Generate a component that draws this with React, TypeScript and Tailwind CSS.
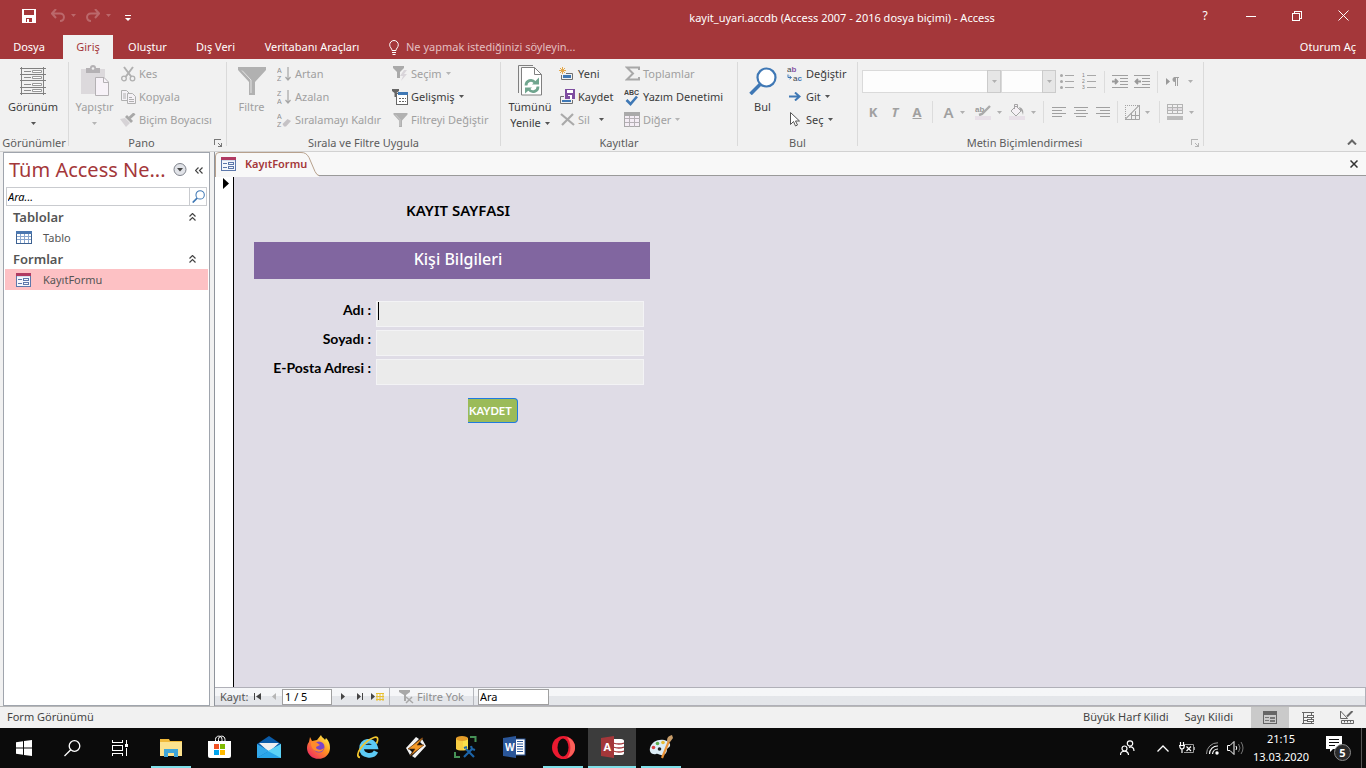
import React from 'react';

type IconProps = {
  w: number;
  h: number;
  children: React.ReactNode;
  crisp?: boolean;
};

function Icon({ w, h, children, crisp }: IconProps) {
  return (
    <svg
      width={w}
      height={h}
      viewBox={`0 0 ${w} ${h}`}
      fill="none"
      className="shrink-0"
      shapeRendering={crisp ? 'crispEdges' : 'auto'}
      aria-hidden="true"
    >
      {children}
    </svg>
  );
}

function Arrow({ color = '#555555' }: { color?: string }) {
  return (
    <Icon w={5} h={3}>
      <path d="M0 0h5L2.5 3z" fill={color} />
    </Icon>
  );
}

/* ---------- Ribbon icons ---------- */

function ViewIcon() {
  return (
    <Icon w={26} h={28}>
      <path d="M1.500 0v28M23.500 0v28M0 1.500h26M0 7.500h26M0 13.500h26M0 20.500h26M0 26.500h26" stroke="#808080" />
      <path d="M4 4.500h7M4 10.500h7M4 17.500h7M4 23.500h7" stroke="#8c8c8c" />
      <path d="M12.500 3.500h9v2h-9zM12.500 9.500h9v2h-9zM12.500 16.500h9v2h-9zM12.500 22.500h9v2h-9z" fill="#ffffff" stroke="#999999" />
    </Icon>
  );
}

function PasteIcon() {
  return (
    <Icon w={28} h={31}>
      <rect x="0" y="4" width="24" height="25" fill="#dcd9dc" />
      <path d="M5 3h4a3 3 0 0 1 6 0h4v5H5z" fill="#b4b1b4" />
      <circle cx="12" cy="3.500" r="1.300" fill="#f1f1f1" />
      <path d="M14.500 12.500h8.500l4.500 4.500v13.500h-13z" fill="#f7f2f8" stroke="#b4b1b4" />
      <path d="M22.500 12.500v5h5" stroke="#b4b1b4" />
    </Icon>
  );
}

function CutIcon() {
  return (
    <Icon w={15} h={16}>
      <path d="M3 1l7.500 10M12 1L4.500 11" stroke="#b0b0b0" strokeWidth="2" />
      <circle cx="3" cy="12.500" r="2.300" stroke="#b0b0b0" strokeWidth="1.300" />
      <circle cx="11.500" cy="12.500" r="2.300" stroke="#b0b0b0" strokeWidth="1.300" />
    </Icon>
  );
}

function CopyIcon() {
  return (
    <Icon w={15} h={14}>
      <path d="M.5.5h5l3 3v7h-8z" fill="#f5f2f6" stroke="#b0b0b0" />
      <path d="M2 4h3M2 6h3M2 8h3" stroke="#b0b0b0" />
      <path d="M6.500 3.500h5l3 3v7h-8z" fill="#f5f2f6" stroke="#b0b0b0" />
      <path d="M8 7.500h3M8 9.500h5M8 11.500h5" stroke="#b0b0b0" />
    </Icon>
  );
}

function BrushIcon() {
  return (
    <Icon w={16} h={14}>
      <path d="M0 6l5-1 5 5-4 4z" fill="#d6d3d6" />
      <path d="M5 4l2-2 6 6-2 2z" fill="#a8a8a8" />
      <path d="M9.500 5L14.500.5" stroke="#a8a8a8" strokeWidth="3" />
    </Icon>
  );
}

function Funnel({ w, h, color = '#b1b1b1' }: { w: number; h: number; color?: string }) {
  return (
    <svg width={w} height={h} viewBox="0 0 28 28" className="shrink-0" aria-hidden="true">
      <path d="M0 0h28v3L17 15v13h-6V15L0 3z" fill={color} />
      <path d="M4 3.500l9 9.500v13" stroke="#e4e4e4" fill="none" />
    </svg>
  );
}

function SortIcon({ kind }: { kind: 'asc' | 'desc' | 'clear' }) {
  const top = kind === 'desc' ? 'Z' : 'A';
  const bottom = kind === 'desc' ? 'A' : 'Z';
  return (
    <Icon w={15} h={18}>
      <text x="0" y="8" fontSize="7" fontFamily="Liberation Sans, sans-serif" fill="#8f8f8f">{top}</text>
      <text x="0" y="16" fontSize="7" fontFamily="Liberation Sans, sans-serif" fill="#8f8f8f">{bottom}</text>
      {kind === 'clear' ? (
        <path d="M5.500 13l5-5 3.500 2-5 5.500H7z" fill="#c5c2c5" />
      ) : (
        <path d="M11 2v12M8.500 12l2.500 3 2.500-3" stroke="#a6a6a6" strokeWidth="1.200" />
      )}
    </Icon>
  );
}

function SelectionIcon() {
  return (
    <Icon w={15} h={15}>
      <path d="M0 0h11v2L7 6v6H4V6L0 2z" fill="#aaaaaa" />
      <path d="M11 4l-4 6h3l-2 5 6-7h-3l3-4z" fill="#d9d5da" />
    </Icon>
  );
}

function AdvancedIcon() {
  return (
    <Icon w={16} h={16}>
      <path d="M0 0h7v2L4.500 4v4h-2V4L0 2z" fill="#666666" />
      <rect x="4.500" y="4.500" width="11" height="11" fill="#ffffff" stroke="#666666" />
      <rect x="6" y="3" width="10" height="3" fill="#3f78b5" />
      <path d="M7 9.500h7M7 12.500h7" stroke="#666666" strokeDasharray="2 1" />
    </Icon>
  );
}

function RefreshIcon() {
  return (
    <Icon w={25} h={31}>
      <path d="M.5 28V.5H15" stroke="#808080" />
      <path d="M3.500 2.500h13l7 7v20.500h-20z" fill="#ffffff" stroke="#808080" />
      <path d="M16.500 2.500v7h7" stroke="#808080" />
      <path d="M8 20.500c0-5 6-7 9-3" stroke="#6fa58e" strokeWidth="2.800" />
      <path d="M14 19.500h7v-7z" fill="#6fa58e" />
      <path d="M20 21.500c0 5-6 7-9 3" stroke="#6fa58e" strokeWidth="2.800" />
      <path d="M14 22.500H7v6z" fill="#6fa58e" />
    </Icon>
  );
}

function NewIcon() {
  return (
    <Icon w={16} h={14}>
      <path d="M3.500 0v7M0 3.500h7M1 1l5 5M6 1L1 6" stroke="#e5a94c" />
      <path d="M7 6.500h6.500v6H2.500V8" stroke="#707070" />
      <rect x="4" y="8" width="8" height="3" fill="#3f78b5" />
    </Icon>
  );
}

function SaveRecordIcon() {
  return (
    <Icon w={16} h={15}>
      <path d="M5 7.500H1.500v7h12V11" stroke="#707070" />
      <rect x="3" y="11" width="9" height="2" fill="#3f78b5" />
      <rect x="6" y="0" width="10" height="10" fill="#7e4da0" />
      <path d="M8 1h6v3H8zM9 6h4v4H9z" fill="#ffffff" />
      <rect x="9" y="7" width="2" height="3" fill="#7e4da0" />
    </Icon>
  );
}

function DeleteIcon() {
  return (
    <Icon w={15} h={13}>
      <path d="M1 1l13 11M13 1L2 12" stroke="#aaaaaa" strokeWidth="2.200" />
    </Icon>
  );
}

function SigmaIcon() {
  return (
    <Icon w={15} h={15}>
      <path d="M14 4V1.500H2l6 6-6 6h12V11" stroke="#a8a8a8" strokeWidth="2" />
    </Icon>
  );
}

function SpellIcon() {
  return (
    <Icon w={16} h={18}>
      <text x="0" y="7" fontSize="7" fontWeight="700" fontFamily="Liberation Sans, sans-serif" fill="#444444">ABC</text>
      <path d="M2.500 12l4 4L13 8.500" stroke="#3f78b5" strokeWidth="2.600" />
    </Icon>
  );
}

function MoreIcon() {
  return (
    <Icon w={16} h={15} crisp>
      <rect x="0.500" y="0.500" width="15" height="14" fill="#f4edf5" stroke="#a8a8a8" />
      <rect x="0" y="0" width="16" height="4" fill="#aaaaaa" />
      <path d="M1 6.500h15M1 10.500h15M5.500 4v11M10.500 4v11" stroke="#b5b0b5" />
    </Icon>
  );
}

function FindIcon({ size = 28 }: { size?: number }) {
  return (
    <svg width={size} height={size} viewBox="0 0 28 28" fill="none" className="shrink-0" aria-hidden="true">
      <circle cx="17.500" cy="10.500" r="9" fill="#ffffff" stroke="#3f78b5" strokeWidth="2.200" />
      <path d="M11 17.500L1.500 27" stroke="#3f78b5" strokeWidth="3.600" />
    </svg>
  );
}

function ReplaceIcon() {
  return (
    <Icon w={17} h={19}>
      <text x="0" y="8" fontSize="8" fontFamily="Liberation Sans, sans-serif" fill="#444444">
        a<tspan fill="#8a55a5" fontWeight="700">b</tspan>
      </text>
      <text x="6" y="17" fontSize="8" fontFamily="Liberation Sans, sans-serif" fill="#444444">
        a<tspan fill="#3f78b5" fontWeight="700">c</tspan>
      </text>
      <path d="M1 10.500v3h3M2.500 12l2 1.500-2 1.500" stroke="#3f78b5" />
    </Icon>
  );
}

function GoIcon() {
  return (
    <Icon w={12} h={9}>
      <path d="M0 4.500h10M6 .5l4.500 4L6 8.500" stroke="#3f78b5" strokeWidth="2" />
    </Icon>
  );
}

function CursorIcon() {
  return (
    <Icon w={10} h={15}>
      <path d="M.5.5v12l3-3 2 4.500 2-1-2-4h4z" fill="#ffffff" stroke="#555555" />
    </Icon>
  );
}

function LauncherIcon({ color }: { color: string }) {
  return (
    <Icon w={8} h={8} crisp>
      <path d="M.5 6V.5H7M4 4l3 3M7.500 4v3.500H4" stroke={color} />
    </Icon>
  );
}

function LinesIcon({ lines }: { lines: [number, number][] }) {
  return (
    <Icon w={14} h={11} crisp>
      {lines.map(([x, len], i) => (
        <path key={i} d={`M${x} ${i * 3 + 0.5}h${len}`} stroke="#a0a0a0" />
      ))}
    </Icon>
  );
}

function ListIcon({ numbered }: { numbered?: boolean }) {
  return (
    <Icon w={15} h={18}>
      {[3, 9, 15].map((y, i) => (
        <g key={y}>
          {numbered ? (
            <text x="0" y={y + 1} fontSize="5" fontFamily="Liberation Sans, sans-serif" fill="#808080">{i + 1}</text>
          ) : (
            <circle cx="1.500" cy={y - 0.5} r="1.500" fill="#a8a8a8" />
          )}
          <path d={`M5 ${y - 0.5}h9`} stroke="#a8a8a8" />
        </g>
      ))}
    </Icon>
  );
}

function IndentIcon({ back }: { back?: boolean }) {
  return (
    <Icon w={16} h={14}>
      <path d="M0 .5h16M8 3.500h8M8 6.500h8M8 9.500h8M0 12.500h16" stroke="#a0a0a0" />
      {back ? (
        <path d="M1 6.500h6M4 4L1.500 6.500 4 9" stroke="#999999" strokeWidth="1.800" />
      ) : (
        <path d="M0 6.500h6M3 4l2.500 2.500L3 9" stroke="#999999" strokeWidth="1.800" />
      )}
    </Icon>
  );
}

/* ---------- Ribbon parts ---------- */

type GroupProps = {
  label: string;
  className: string;
  launcher?: string;
  children: React.ReactNode;
};

function Group({ label, className, launcher, children }: GroupProps) {
  return (
    <section className={`flex shrink-0 flex-col ${className}`} aria-label={label}>
      <div className="flex h-[73px] w-full items-start">{children}</div>
      <div className="flex h-4 w-full items-center">
        <span className="flex-1 text-center whitespace-nowrap text-[#5c5c5c]">{label}</span>
        {launcher && (
          <button type="button" aria-label={`${label} ayarları`} className="mr-1">
            <LauncherIcon color={launcher} />
          </button>
        )}
      </div>
    </section>
  );
}

function Separator() {
  return <div className="h-[84px] w-px shrink-0 bg-[#dadada]" />;
}

type BigButtonProps = {
  className: string;
  icon: React.ReactNode;
  label: string;
  second?: string;
  arrow?: boolean;
  disabled?: boolean;
};

function BigButton({ className, icon, label, second, arrow, disabled }: BigButtonProps) {
  return (
    <button
      type="button"
      disabled={disabled}
      className={`flex shrink-0 flex-col items-center ${disabled ? 'text-[#a0a0a0]' : 'text-[#3c3c3c]'} ${className}`}
    >
      <span className="flex h-[37px] items-center">{icon}</span>
      <span className="h-4 leading-4 whitespace-nowrap">{label}</span>
      {second && (
        <span className="flex h-4 items-center gap-1 leading-4 whitespace-nowrap">
          {second}
          <Arrow />
        </span>
      )}
      {arrow && (
        <span className="flex h-4 items-center">
          <Arrow color={disabled ? '#b5b5b5' : '#555555'} />
        </span>
      )}
    </button>
  );
}

type SmallButtonProps = {
  icon: React.ReactNode;
  label: string;
  arrow?: boolean;
  disabled?: boolean;
};

function SmallButton({ icon, label, arrow, disabled }: SmallButtonProps) {
  return (
    <button
      type="button"
      disabled={disabled}
      className={`flex h-[23px] items-center whitespace-nowrap ${disabled ? 'text-[#a0a0a0]' : 'text-[#3c3c3c]'}`}
    >
      <span className="mr-[3px] flex w-4 items-center justify-center">{icon}</span>
      {label}
      {arrow && (
        <span className="ml-1">
          <Arrow color={disabled ? '#b5b5b5' : '#555555'} />
        </span>
      )}
    </button>
  );
}

function ToolButton({ label, className, children }: { label: string; className: string; children: React.ReactNode }) {
  return (
    <button type="button" disabled aria-label={label} className={`flex h-5 shrink-0 items-center justify-center text-[#a0a0a0] ${className}`}>
      {children}
    </button>
  );
}

function Combo({ label, className }: { label: string; className: string }) {
  return (
    <div className={`relative h-[23px] shrink-0 ${className}`}>
      <select disabled aria-label={label} className="h-full w-full appearance-none border border-[#dadada] bg-[#fdfdfd]">
        <option></option>
      </select>
      <span className="pointer-events-none absolute inset-y-0 right-0 flex w-[14px] items-center justify-center border border-[#cbcbcb] bg-[#e6e6e6]">
        <Arrow color="#b0b0b0" />
      </span>
    </div>
  );
}

function ToolDivider({ className }: { className: string }) {
  return <span className={`h-[22px] w-px shrink-0 bg-[#dcdcdc] ${className}`} />;
}

function TitleBar() {
  return (
    <div className="flex h-[35px] items-center">
      <div className="flex w-[300px] items-center pb-1 pl-[22px]">
        <button type="button" aria-label="Kaydet">
          <Icon w={14} h={14} crisp>
            <path d="M0 0h14v14H0zM2 1v5h10V1zM4 9v4h6V9z" fill="#ffffff" fillRule="evenodd" />
            <rect x="5" y="10" width="2" height="3" fill="#ffffff" />
          </Icon>
        </button>
        <button type="button" disabled aria-label="Geri Al" className="ml-[15px] flex items-center gap-[6px]">
          <Icon w={14} h={13}>
            <path d="M5 0L1 4.500 5 9M1.500 4.500H9c5.500 0 5 7.500 0 7.500" stroke="#bb686b" strokeWidth="2" />
          </Icon>
          <Arrow color="#bb686b" />
        </button>
        <button type="button" disabled aria-label="Yinele" className="ml-[10px] flex items-center gap-[6px]">
          <Icon w={14} h={13}>
            <path d="M9 0l4 4.500L9 9M12.500 4.500H5c-5.500 0-5 7.500 0 7.500" stroke="#bb686b" strokeWidth="2" />
          </Icon>
          <Arrow color="#bb686b" />
        </button>
        <button type="button" aria-label="Hızlı Erişim Araç Çubuğunu Özelleştir" className="mt-1 ml-[14px]">
          <Icon w={6} h={6}>
            <path d="M0 .5h6" stroke="#ffffff" />
            <path d="M0 3h6L3 6z" fill="#ffffff" />
          </Icon>
        </button>
      </div>
      <div className="flex-1 pl-[202px] text-center whitespace-nowrap text-white">
        kayit_uyari.accdb (Access 2007 - 2016 dosya biçimi) - Access
      </div>
      <div className="flex w-[184px] shrink-0 items-center pb-1 text-white">
        <button type="button" aria-label="Yardım" className="w-[46px] text-xs">?</button>
        <button type="button" aria-label="Simge Durumuna Küçült" className="flex w-[46px] justify-center">
          <Icon w={10} h={10} crisp><path d="M0 5.500h10" stroke="#ffffff" /></Icon>
        </button>
        <button type="button" aria-label="Geri Yükle" className="flex w-[46px] justify-center">
          <Icon w={10} h={10} crisp>
            <path d="M.5 2.500h7v7h-7zM2.500 2V.5h7v7H8" stroke="#ffffff" />
          </Icon>
        </button>
        <button type="button" aria-label="Kapat" className="flex w-[46px] justify-center">
          <Icon w={11} h={11}><path d="M.5.5l10 10M10.500.5l-10 10" stroke="#ffffff" /></Icon>
        </button>
      </div>
    </div>
  );
}

function RibbonTabs() {
  return (
    <nav className="flex h-6 items-center whitespace-nowrap text-white">
      <button type="button" className="w-[63px] pr-[5px] text-center">Dosya</button>
      <button type="button" className="h-full w-[50px] bg-[#f1f1f1] text-center text-[#a4373a]">Giriş</button>
      <button type="button" className="w-[69px] text-center">Oluştur</button>
      <button type="button" className="w-[67px] text-center">Dış Veri</button>
      <button type="button" className="w-[126px] text-center">Veritabanı Araçları</button>
      <button type="button" className="ml-[14px] flex items-center gap-[7px] text-[#e3bfc0]">
        <Icon w={10} h={15}>
          <path d="M3 10.500C3 8.500.7 7.500.7 4.800a4.300 4.300 0 0 1 8.600 0C9.300 7.500 7 8.500 7 10.500z" stroke="#ffffff" />
          <path d="M3 12.500h4M3.500 14.500h3" stroke="#ffffff" />
        </Icon>
        Ne yapmak istediğinizi söyleyin...
      </button>
      <button type="button" className="mr-[10px] ml-auto">Oturum Aç</button>
    </nav>
  );
}

function Ribbon() {
  return (
    <div className="flex h-[93px] items-start overflow-hidden border-b border-[#d2d2d2] bg-[#f1f1f1] pt-[3px]">
      <Group label="Görünümler" className="w-[68px]">
        <BigButton className="w-[66px]" icon={<ViewIcon />} label="Görünüm" arrow />
      </Group>
      <Separator />
      <Group label="Pano" className="w-[157px]" launcher="#777777">
        <BigButton className="w-[51px]" icon={<PasteIcon />} label="Yapıştır" arrow disabled />
        <div className="flex flex-col">
          <SmallButton icon={<CutIcon />} label="Kes" disabled />
          <SmallButton icon={<CopyIcon />} label="Kopyala" disabled />
          <SmallButton icon={<BrushIcon />} label="Biçim Boyacısı" disabled />
        </div>
      </Group>
      <Separator />
      <Group label="Sırala ve Filtre Uygula" className="w-[273px]">
        <BigButton className="w-[49px]" icon={<Funnel w={28} h={28} />} label="Filtre" disabled />
        <div className="flex w-[116px] flex-col">
          <SmallButton icon={<SortIcon kind="asc" />} label="Artan" disabled />
          <SmallButton icon={<SortIcon kind="desc" />} label="Azalan" disabled />
          <SmallButton icon={<SortIcon kind="clear" />} label="Sıralamayı Kaldır" disabled />
        </div>
        <div className="flex flex-col">
          <SmallButton icon={<SelectionIcon />} label="Seçim" arrow disabled />
          <SmallButton icon={<AdvancedIcon />} label="Gelişmiş" arrow />
          <SmallButton icon={<Funnel w={15} h={14} />} label="Filtreyi Değiştir" disabled />
        </div>
      </Group>
      <Separator />
      <Group label="Kayıtlar" className="w-[236px]">
        <BigButton className="w-[58px]" icon={<RefreshIcon />} label="Tümünü" second="Yenile" />
        <div className="flex w-[65px] flex-col">
          <SmallButton icon={<NewIcon />} label="Yeni" />
          <SmallButton icon={<SaveRecordIcon />} label="Kaydet" />
          <div className="flex items-center gap-[9px]">
            <SmallButton icon={<DeleteIcon />} label="Sil" disabled />
            <button type="button" aria-label="Silme seçenekleri"><Arrow /></button>
          </div>
        </div>
        <div className="flex flex-col">
          <SmallButton icon={<SigmaIcon />} label="Toplamlar" disabled />
          <SmallButton icon={<SpellIcon />} label="Yazım Denetimi" />
          <SmallButton icon={<MoreIcon />} label="Diğer" arrow disabled />
        </div>
      </Group>
      <Separator />
      <Group label="Bul" className="w-[119px]">
        <BigButton className="w-[49px]" icon={<FindIcon />} label="Bul" />
        <div className="flex flex-col">
          <SmallButton icon={<ReplaceIcon />} label="Değiştir" />
          <SmallButton icon={<GoIcon />} label="Git" arrow />
          <SmallButton icon={<CursorIcon />} label="Seç" arrow />
        </div>
      </Group>
      <Separator />
      <Group label="Metin Biçimlendirmesi" className="w-[345px]" launcher="#b5b5b5">
        <div className="flex flex-col pt-2 pl-1">
          <div className="flex items-center">
            <Combo label="Yazı Tipi" className="w-[139px]" />
            <Combo label="Yazı Tipi Boyutu" className="w-[55px]" />
            <ToolButton label="Madde İşaretleri" className="w-[22px]"><ListIcon /></ToolButton>
            <ToolButton label="Numaralandırma" className="w-[22px]"><ListIcon numbered /></ToolButton>
            <ToolDivider className="mr-1 ml-1" />
            <ToolButton label="Girintiyi Artır" className="w-[22px]"><IndentIcon /></ToolButton>
            <ToolButton label="Girintiyi Azalt" className="w-[22px]"><IndentIcon back /></ToolButton>
            <ToolDivider className="mr-2 ml-1" />
            <ToolButton label="Metin Yönü" className="gap-[9px]">
              <Icon w={13} h={10}>
                <path d="M0 1l4 3.500L0 8z" fill="#999999" />
                <path d="M9 0a2.500 2.500 0 0 0 0 5z" fill="#a0a0a0" />
                <path d="M8 .5h5M9.500 0v9M11.500 0v9" stroke="#a0a0a0" />
              </Icon>
              <Arrow color="#b0b0b0" />
            </ToolButton>
          </div>
          <div className="mt-2 flex items-center">
            <ToolButton label="Kalın" className="w-[22px]"><b className="text-[13px]">K</b></ToolButton>
            <ToolButton label="İtalik" className="w-[22px]"><i className="text-[13px] font-bold">T</i></ToolButton>
            <ToolButton label="Altı Çizili" className="w-[22px]"><b className="text-[13px] underline">A</b></ToolButton>
            <ToolDivider className="mr-1 ml-1" />
            <ToolButton label="Yazı Tipi Rengi" className="w-[34px] gap-[6px]">
              <span className="text-[15px] font-semibold">A</span>
              <Arrow color="#b0b0b0" />
            </ToolButton>
            <ToolButton label="Vurgu Rengi" className="w-[34px] gap-[6px]">
              <Icon w={16} h={16}>
                <text x="0" y="8" fontSize="8" fontWeight="700" fontFamily="Liberation Sans, sans-serif" fill="#999999">ab</text>
                <path d="M15 2L7 10l-3 1" stroke="#aaaaaa" strokeWidth="2.400" />
                <rect x="0" y="12" width="16" height="4" fill="#e8e0e8" />
              </Icon>
              <Arrow color="#b0b0b0" />
            </ToolButton>
            <ToolButton label="Arka Plan Rengi" className="w-[34px] gap-[6px]">
              <Icon w={16} h={16}>
                <path d="M2 7l5-5 5 5-5 5zM5.500 5V.5h3V4" fill="#f5f0f5" stroke="#a5a5a5" />
                <path d="M10 3c4 1 5 4 4 8-1-3-1-4-3-5z" fill="#a5a5a5" />
                <rect x="0" y="12" width="16" height="4" fill="#e8e0e8" />
              </Icon>
              <Arrow color="#b0b0b0" />
            </ToolButton>
            <ToolDivider className="mr-1 ml-1" />
            <ToolButton label="Sola Hizala" className="w-[22px]"><LinesIcon lines={[[0, 14], [0, 10], [0, 14], [0, 10]]} /></ToolButton>
            <ToolButton label="Ortala" className="w-[22px]"><LinesIcon lines={[[0, 14], [2, 10], [0, 14], [2, 10]]} /></ToolButton>
            <ToolButton label="Sağa Hizala" className="w-[22px]"><LinesIcon lines={[[0, 14], [4, 10], [0, 14], [4, 10]]} /></ToolButton>
            <ToolDivider className="mr-[7px] ml-[3px]" />
            <ToolButton label="Kılavuz Çizgileri" className="gap-[5px]">
              <Icon w={15} h={15}>
                <path d="M.5 15V0M0 .5h15" stroke="#a5a5a5" strokeDasharray="1 1" />
                <path d="M0 14.500h14.500V0zM14.500 0L0 14.500M6 10.500h8M10.500 6v8M6.500 8v6" stroke="#a5a5a5" />
              </Icon>
              <Arrow color="#b0b0b0" />
            </ToolButton>
            <ToolDivider className="mr-[7px] ml-[9px]" />
            <ToolButton label="Alternatif Satır Rengi" className="gap-[6px]">
              <Icon w={16} h={16} crisp>
                <rect x="1" y="3" width="14" height="4" fill="#e0dce0" />
                <path d="M.5.5h15v9H.5zM1 3.500h15M1 6.500h15M5.500 0v10M10.500 0v10" stroke="#b4b4b4" />
                <rect x="0" y="12" width="16" height="4" fill="#bcbcbc" />
              </Icon>
              <Arrow color="#b0b0b0" />
            </ToolButton>
          </div>
        </div>
      </Group>
      <Separator />
      <button type="button" aria-label="Şeridi Daralt" className="mt-auto mr-[9px] mb-[6px] ml-auto">
        <Icon w={10} h={6}>
          <path d="M1 5.500l4-4 4 4" stroke="#666666" strokeWidth="2" />
        </Icon>
      </button>
    </div>
  );
}

/* ---------- Navigation pane ---------- */

function FormIcon() {
  return (
    <Icon w={16} h={14} crisp>
      <rect x="0.500" y="0.500" width="14" height="13" fill="#f4f7fc" stroke="#5d78ab" />
      <rect x="0" y="0" width="15" height="3" fill="#b03a62" />
      <rect x="1" y="3" width="13" height="1" fill="#d4dcec" />
      <path d="M2 6.500h4M2 10.500h4" stroke="#5d78ab" />
      <path d="M7.500 5.500h5v2h-5zM7.500 9.500h5v2h-5z" stroke="#5d78ab" />
    </Icon>
  );
}

function TableIcon() {
  return (
    <Icon w={16} h={13} crisp>
      <rect x="0.500" y="0.500" width="15" height="12" fill="#ffffff" stroke="#3d6191" />
      <rect x="0" y="0" width="16" height="3" fill="#4c78b0" />
      <path d="M1 5.500h14M1 8.500h14M4.500 3v9M8.500 3v9M12.500 3v9" stroke="#8aa7cf" />
    </Icon>
  );
}

function DoubleChevron() {
  return (
    <Icon w={7} h={8}>
      <path d="M.5 3.500l3-3 3 3M.5 7.500l3-3 3 3" stroke="#444444" strokeWidth="1.200" />
    </Icon>
  );
}

const navGroups = [
  { title: 'Tablolar', item: 'Tablo', icon: <TableIcon />, selected: false },
  { title: 'Formlar', item: 'KayıtFormu', icon: <FormIcon />, selected: true },
];

function NavigationPane() {
  return (
    <aside className="ml-[3px] flex w-[207px] shrink-0 flex-col border border-[#a0a5ad] bg-white">
      <div className="flex h-[34px] items-center pl-[5px]">
        <h2 className="w-[164px] text-[20px] leading-6 whitespace-nowrap text-[#a4373a]">Tüm Access Ne...</h2>
        <button type="button" aria-label="Gezinti menüsü">
          <Icon w={14} h={14}>
            <circle cx="7" cy="6.500" r="6" fill="#e1e3e8" stroke="#7f838c" />
            <path d="M4 5h6L7 8.500z" fill="#444444" />
          </Icon>
        </button>
        <button type="button" aria-label="Gezinti bölmesini daralt" className="ml-2">
          <Icon w={8} h={7}>
            <path d="M3.500.5l-3 3 3 3M7.500.5l-3 3 3 3" stroke="#444444" strokeWidth="1.200" />
          </Icon>
        </button>
      </div>
      <div className="mr-[2px] ml-[2px] flex h-[19px] border border-[#c9cbcf]">
        <input
          type="text"
          aria-label="Gezinti bölmesinde ara"
          placeholder="Ara..."
          className="min-w-0 flex-1 px-px text-[11px] italic outline-none placeholder:text-black"
        />
        <button type="button" aria-label="Ara" className="flex w-[17px] items-center justify-center border-l border-[#c9cbcf]">
          <FindIcon size={13} />
        </button>
      </div>
      {navGroups.map((group) => (
        <div key={group.title}>
          <div className="flex h-[21px] items-center justify-between pr-[13px] pl-[9px]">
            <h3 className="text-[13px] font-semibold text-[#555555]">{group.title}</h3>
            <button type="button" aria-label={`${group.title} grubunu daralt`}><DoubleChevron /></button>
          </div>
          <a
            href="#"
            className={`mx-px flex h-[21px] items-center gap-[11px] pl-[11px] text-[#555555] ${group.selected ? 'bg-[#fdc1c4]' : ''}`}
          >
            {group.icon}
            {group.item}
          </a>
        </div>
      ))}
    </aside>
  );
}

/* ---------- Form ---------- */

const fields = [
  { id: 'adi', label: 'Adı :' },
  { id: 'soyadi', label: 'Soyadı :' },
  { id: 'eposta', label: 'E-Posta Adresi :' },
];

function DocumentTabs() {
  return (
    <div className="flex h-6 items-center border-b border-[#9a9a9a] bg-[#f8f8f8]">
      <div className="relative h-full w-[104px]">
        <svg width="104" height="25" viewBox="0 0 104 25" className="absolute top-0 left-0" aria-hidden="true">
          <path d="M.5 25V4Q.5.5 4 .5h84c3 0 5 1.500 6.500 4l7 16q1.500 3.500 3 3.500v1z" fill="#f8f8f8" />
          <path d="M.5 25V4Q.5.5 4 .5h82c4 0 6 1.500 8 5l6 14q2 4 4 4" fill="none" stroke="#b7a18d" />
        </svg>
        <button type="button" className="relative flex h-full items-center gap-2 pl-[6px] font-semibold text-[#a4373a]">
          <FormIcon />
          KayıtFormu
        </button>
      </div>
      <button type="button" aria-label="Formu kapat" className="mr-2 ml-auto">
        <Icon w={8} h={8}>
          <path d="M.5.5l7 7M7.500.5l-7 7" stroke="#333333" strokeWidth="1.500" />
        </Icon>
      </button>
    </div>
  );
}

function FormView() {
  return (
    <div className="flex flex-1 bg-[#dfdce6]">
      <div className="w-[19px] shrink-0 border-r border-black bg-white pt-[2px] pl-2">
        <Icon w={6} h={11}>
          <path d="M0 0l6 5.500L0 11z" fill="#000000" />
        </Icon>
      </div>
      <form className="w-[416px] pl-5 text-black">
        <h1 className="mt-6 ml-[12px] text-center text-[15px] leading-5 font-semibold">KAYIT SAYFASI</h1>
        <div className="mt-[22px] h-[37px] bg-[#8166a0] pl-[12px] text-center text-[16px] leading-[34px] font-medium text-white">
          Kişi Bilgileri
        </div>
        <div className="mt-[22px] flex flex-col gap-[3px]">
          {fields.map((field, i) => (
            <div key={field.id} className="relative flex">
              <label htmlFor={field.id} className="w-[117px] text-right font-['Lato'] text-[14px] leading-[18px] font-bold">
                {field.label}
              </label>
              <input
                id={field.id}
                type="text"
                className="ml-[5px] h-[26px] w-[268px] border border-[#f3f3f5] bg-[#ebebeb] px-1 text-xs outline-none"
              />
              {i === 0 && <span className="absolute top-[1px] left-[124px] h-[18px] w-px bg-black" />}
            </div>
          ))}
        </div>
        <button
          type="button"
          className="mt-[13px] ml-[214px] flex h-[25px] w-[50px] items-center rounded-r border border-l-0 border-[#1f7ae0] bg-[#9bbb59] pl-px font-['Lato'] text-[11px] font-bold text-white"
        >
          KAYDET
        </button>
      </form>
    </div>
  );
}

function RecordNavigation() {
  return (
    <div className="flex h-[19px] items-center border border-l-0 border-[#b0b0b8] bg-linear-to-b from-[#f5f6f8] from-50% to-[#e4e6ea] to-50% text-[#555555]">
      <span className="w-[38px] pl-[5px]">Kayıt:</span>
      <button type="button" aria-label="İlk kayıt" className="flex w-[14px] items-center justify-center pr-[6px]">
        <Icon w={7} h={7}><path d="M0 0h1v7H0zM7 0v7L2 3.500z" fill="#444444" /></Icon>
      </button>
      <button type="button" disabled aria-label="Önceki kayıt" className="flex w-[15px] items-center justify-end pr-[6px]">
        <Icon w={4} h={7}><path d="M4 0v7L0 3.500z" fill="#b5b5b5" /></Icon>
      </button>
      <input aria-label="Geçerli kayıt" defaultValue="1 / 5" className="h-4 w-[50px] border border-[#a0a0a0] bg-white px-[2px] text-[11px] text-black outline-none" />
      <button type="button" aria-label="Sonraki kayıt" className="ml-[9px]">
        <Icon w={4} h={7}><path d="M0 0v7l4-3.500z" fill="#444444" /></Icon>
      </button>
      <button type="button" aria-label="Son kayıt" className="ml-3">
        <Icon w={6} h={7}><path d="M5 0h1v7H5zM0 0v7l4-3.500z" fill="#444444" /></Icon>
      </button>
      <button type="button" aria-label="Yeni (boş) kayıt" className="ml-2">
        <Icon w={13} h={8}>
          <path d="M0 0v7l4-3.500z" fill="#444444" />
          <path d="M5 .5h8M5 3.500h8M5 6.500h8M6 0v8M9 0v8M12 0v8" stroke="#e8c030" />
        </Icon>
      </button>
      <span className="ml-[5px] h-full w-px bg-[#b5b7bd]" />
      <button type="button" disabled className="flex w-[83px] items-center gap-[3px] pl-[9px] whitespace-nowrap text-[#8f8f8f]">
        <Icon w={15} h={14}>
          <path d="M0 0h11v2L7 5v6H5V5L0 2z" fill="#a8a8a8" />
          <path d="M7 7l7 6M13 7l-6 6" stroke="#a8a8a8" strokeWidth="1.500" />
        </Icon>
        Filtre Yok
      </button>
      <span className="h-full w-px bg-[#b5b7bd]" />
      <input aria-label="Kayıtlarda ara" defaultValue="Ara" className="ml-1 h-4 w-[71px] border border-[#a0a0a0] bg-white px-px text-[11px] text-black outline-none" />
    </div>
  );
}

function StatusBar() {
  return (
    <div className="flex h-[22px] items-center border-t border-[#b8b8b8] bg-[#f1f1f1] pl-[7px] text-[#444444]">
      <span className="mr-auto pb-px">Form Görünümü</span>
      <span className="mr-4 pb-px">Büyük Harf Kilidi</span>
      <span className="mr-[18px] pb-px">Sayı Kilidi</span>
      <button type="button" aria-label="Form Görünümü" className="flex h-full w-[38px] items-center justify-center bg-[#cacaca]">
        <Icon w={14} h={13} crisp>
          <path d="M.5.5h13v12H.5z" stroke="#666666" />
          <rect x="0" y="0" width="14" height="4" fill="#666666" />
          <path d="M2 6.500h4M2 9.500h4M7 6.500h5M7 7.500h5M7 9.500h5M7 10.500h5" stroke="#777777" />
        </Icon>
      </button>
      <button type="button" aria-label="Düzen Görünümü" className="flex w-[38px] justify-center">
        <Icon w={12} h={12} crisp>
          <path d="M1.500 0v12M9.500 0v12M0 .5h12M0 11.500h12M2 5.500h4M2 8.500h4" stroke="#666666" />
          <path d="M5.500 3.500h6v2h-6zM5.500 7.500h6v2h-6z" fill="#ffffff" stroke="#666666" />
        </Icon>
      </button>
      <button type="button" aria-label="Tasarım Görünümü" className="flex w-[39px] justify-center">
        <Icon w={14} h={13}>
          <path d="M.5 0v7.500h7z" stroke="#666666" />
          <path d="M12.500 0L7 5.500" stroke="#666666" strokeWidth="2" />
          <path d="M1.500 9.500h12v3h-12zM4.500 10v1.500M7.500 10v1.500M10.500 10v1.500" stroke="#666666" />
        </Icon>
      </button>
    </div>
  );
}

/* ---------- Taskbar ---------- */

const apps = [
  {
    name: 'Dosya Gezgini',
    state: 'open',
    icon: (
      <Icon w={22} h={19}>
        <path d="M0 1h9l1 2h12v15H0z" fill="#f0b93a" />
        <path d="M0 4h22v14H0z" fill="#fce28e" />
        <path d="M4 19v-8h14v8h-4v-4H8v4z" fill="#3fa6d9" />
      </Icon>
    ),
  },
  {
    name: 'Microsoft Store',
    state: '',
    icon: (
      <Icon w={24} h={24}>
        <path d="M7.500 6V4.500C7.500 0 14 0 14 4.500V6M10.500 6V4.500C10.500 0 17 0 17 4.500V6" stroke="#ffffff" />
        <path d="M0 6h23v15a2 2 0 0 1-2 2H2a2 2 0 0 1-2-2z" fill="#ffffff" />
        <path d="M6 9h5v5H6z" fill="#f25022" />
        <path d="M12 9h5v5h-5z" fill="#7fba00" />
        <path d="M6 15h5v5H6z" fill="#00a4ef" />
        <path d="M12 15h5v5h-5z" fill="#ffb900" />
      </Icon>
    ),
  },
  {
    name: 'Posta',
    state: '',
    icon: (
      <Icon w={24} h={22}>
        <path d="M0 8l12-8 12 8v14H0z" fill="#0a5ba8" />
        <path d="M2 7h20l-10 9z" fill="#f0f0f0" />
        <path d="M0 8l12 7-12 7z" fill="#32a8ea" />
        <path d="M24 8L10 16l-10 6h24z" fill="#28a4e8" />
        <path d="M24 8v14l-13-7z" fill="#5cd2f6" />
      </Icon>
    ),
  },
  {
    name: 'Firefox',
    state: '',
    icon: (
      <Icon w={23} h={24}>
        <defs>
          <linearGradient id="fox" x1="0.900" y1="0.100" x2="0.200" y2="0.900">
            <stop offset="0" stopColor="#fff04a" />
            <stop offset="0.450" stopColor="#ff9422" />
            <stop offset="1" stopColor="#f0355b" />
          </linearGradient>
        </defs>
        <path d="M3 2l2 4 5-1 4-5c1 3 3 3 4 5l1-2c4 4 4 8 4 10A11.500 10.800 0 0 1 0 13c0-3 1-5 2-6z" fill="url(#fox)" />
        <circle cx="12" cy="12" r="5.500" fill="#7a45c9" />
        <path d="M4 7c3-1 6 0 9 3l-4 2c0 3 5 4 8 1-1 6-14 5-13-6z" fill="#ff8b2b" />
      </Icon>
    ),
  },
  {
    name: 'Internet Explorer',
    state: '',
    icon: (
      <Icon w={23} h={23}>
        <path d="M20 15.500c-3 6-14 5-14.500-3S17 2 19.500 11H7" stroke="#5ccaf5" strokeWidth="4.600" />
        <path d="M4 21.500C-3 20 8 5 18 1.500c5-1.500 4 3 2.500 6" stroke="#f2c52d" strokeWidth="1.700" />
      </Icon>
    ),
  },
  {
    name: 'Winamp',
    state: '',
    icon: (
      <Icon w={20} h={22}>
        <path d="M0 12L10 1l3 2L3 13l3 3-2 3zM20 10L9 22l-3-2 11-11-3-3 2-3z" fill="#f2f2f2" />
        <path d="M16 2L2 13h7L4 20l14-11h-7l6-7z" fill="#f59a28" stroke="#6b3b10" strokeWidth="0.700" />
      </Icon>
    ),
  },
  {
    name: 'SQL Server',
    state: '',
    icon: (
      <Icon w={23} h={22}>
        <path d="M2 2h12v11c-2 2-10 2-12 0z" fill="#f8ce43" />
        <path d="M9 4h5v9l-5 1z" fill="#fce04a" />
        <ellipse cx="8" cy="2.500" rx="6" ry="2.500" fill="#e39c29" />
        <path d="M16 1h5.500v5M1 16v5h5" stroke="#469257" strokeWidth="2" />
        <path d="M10 21l8-8M12 13l8 8M10 12l3-1M17 10l1 3 3 1" stroke="#1d64a8" strokeWidth="2.200" />
      </Icon>
    ),
  },
  {
    name: 'Word',
    state: '',
    icon: (
      <Icon w={23} h={22}>
        <rect x="10" y="3" width="12" height="16" fill="#ffffff" stroke="#2a5699" />
        <path d="M14 5.500h6M14 8h6M14 10.500h6M14 13h6M14 15.500h6" stroke="#2a5699" />
        <path d="M0 2l13-2v22L0 20z" fill="#2a5699" />
        <text x="2" y="15" fontSize="10" fontWeight="700" fontFamily="Noto Sans, sans-serif" fill="#ffffff">W</text>
      </Icon>
    ),
  },
  {
    name: 'Opera',
    state: 'open',
    icon: (
      <Icon w={23} h={23}>
        <ellipse cx="11.500" cy="11.500" rx="11.500" ry="11.500" fill="#eb1a30" />
        <path d="M15 1a11.500 11 0 0 1 0 21c5-6 4-16 0-21z" fill="#fa6059" />
        <ellipse cx="11" cy="11.500" rx="5.500" ry="9" fill="#0c0c0c" />
      </Icon>
    ),
  },
  {
    name: 'Access',
    state: 'active',
    icon: (
      <Icon w={23} h={22}>
        <path d="M12 3h8c2 0 3 1 3 2v12c0 2-2 2-3 2h-8z" fill="#ffffff" />
        <path d="M12 7q6 2 11 0M12 11q6 2 11 0M12 15q6 2 11 0" stroke="#a4373a" strokeWidth="1.300" />
        <path d="M0 2l13-2v22L0 20z" fill="#a4373a" />
        <text x="2.500" y="15" fontSize="11" fontWeight="700" fontFamily="Noto Sans, sans-serif" fill="#ffffff">A</text>
      </Icon>
    ),
  },
  {
    name: 'Paint',
    state: 'open',
    icon: (
      <Icon w={24} h={24}>
        <path d="M1 13C3 5 12 3 18 6c5 3 3 6 1 7s0 4-3 6c-5 3-6-1-9 0-4 1-7-2-6-6z" fill="#dcecf6" />
        <circle cx="4.500" cy="12.500" r="1.800" fill="#d94242" />
        <circle cx="8.500" cy="8.500" r="1.800" fill="#5bac4b" />
        <circle cx="14" cy="7.500" r="1.800" fill="#e6bb34" />
        <circle cx="10.500" cy="14" r="1.800" fill="#222222" />
        <path d="M13 23l7-17" stroke="#e99237" strokeWidth="2.200" />
        <path d="M18 6c0-3 1-5 5-6l1 3-3 4z" fill="#c89d6a" />
      </Icon>
    ),
  },
];

function Taskbar() {
  return (
    <footer className="flex h-10 items-center bg-[#0b0b0b] text-white">
      <button type="button" aria-label="Başlat" className="flex w-12 justify-center">
        <Icon w={16} h={16}>
          <path d="M0 2.300L7 1.200v6.300H0zM8 1l8-1v7.500H8zM0 8.500h7v6.300l-7-1.100zM8 8.500h8V16l-8-1.100z" fill="#ffffff" />
        </Icon>
      </button>
      <button type="button" aria-label="Ara" className="flex w-12 justify-center">
        <Icon w={17} h={17}>
          <circle cx="10.500" cy="6" r="5.300" stroke="#ffffff" strokeWidth="1.300" />
          <path d="M6.800 9.800L.5 16" stroke="#ffffff" strokeWidth="1.300" />
        </Icon>
      </button>
      <button type="button" aria-label="Görev Görünümü" className="mr-[3px] flex w-12 justify-center">
        <Icon w={17} h={16} crisp>
          <path d="M.5 0v2.500h10V0M.5 5.500h10v5H.5zM.5 16v-2.500h10V16M14.500 0v4M14.500 8v8" stroke="#ffffff" />
          <rect x="13" y="4" width="3" height="3" fill="#ffffff" />
        </Icon>
      </button>
      <div className="flex h-full gap-px">
        {apps.map((app) => (
          <button
            key={app.name}
            type="button"
            aria-label={app.name}
            className={`flex h-full w-12 flex-col items-center ${app.state === 'active' ? 'bg-[#3c3c3c]' : ''}`}
          >
            <span className="flex h-[38px] items-center">{app.icon}</span>
            {app.state === 'open' && <span className="h-[2px] w-10 bg-[#7fdfe8]" />}
            {app.state === 'active' && <span className="h-[2px] w-12 bg-[#7fdfe8]" />}
          </button>
        ))}
      </div>
      <div className="ml-auto flex h-full items-center">
        <button type="button" aria-label="Kişiler">
          <Icon w={15} h={16}>
            <circle cx="10" cy="3.500" r="2.700" stroke="#ffffff" strokeWidth="1.200" />
            <circle cx="4.500" cy="8.500" r="2.500" stroke="#ffffff" strokeWidth="1.200" />
            <path d="M.5 15c0-5 8-5 8 0M9 7.500c3-1.500 5 .5 5 3.500" stroke="#ffffff" strokeWidth="1.200" />
          </Icon>
        </button>
        <button type="button" aria-label="Gizli simgeleri göster" className="ml-[22px]">
          <Icon w={12} h={7}><path d="M.5 6.500L6 1l5.500 5.500" stroke="#ffffff" strokeWidth="1.300" /></Icon>
        </button>
        <button type="button" aria-label="Pil" className="ml-[10px]">
          <Icon w={16} h={12}>
            <path d="M5 2.500h9.500v8H5M15.500 5v3" stroke="#9a9a9a" />
            <path d="M1.500 0v3M4.500 0v3M0 3.500h6M.8 4c0 4 4.400 4 4.400 0M3 7v4" stroke="#ffffff" strokeWidth="1.200" />
            <path d="M7.500 4.500l4.500 4.500M12 4.500L7.500 9" stroke="#ffffff" strokeWidth="1.200" />
          </Icon>
        </button>
        <button type="button" aria-label="Wi-Fi" className="ml-[11px]">
          <Icon w={13} h={13}>
            <path d="M.5 12A11 11 0 0 1 12 .8" stroke="#9a9a9a" />
            <path d="M3.500 12A8 8 0 0 1 12 4M6.500 12A5.500 5.500 0 0 1 12 7" stroke="#ffffff" strokeWidth="1.200" />
            <circle cx="11" cy="11" r="1.700" fill="#ffffff" />
          </Icon>
        </button>
        <button type="button" aria-label="Ses" className="ml-2">
          <Icon w={17} h={14}>
            <path d="M.5 4.500h2.500l4-4v13l-4-4H.5z" stroke="#ffffff" />
            <path d="M9 5q1.500 2 0 4" stroke="#ffffff" />
            <path d="M11.500 3q3 4 0 8M14 1q4 6 0 12" stroke="#777777" />
          </Icon>
        </button>
        <button type="button" className="ml-2 flex w-[58px] flex-col items-center text-[11px] leading-[18px]">
          <span>21:15</span>
          <span>13.03.2020</span>
        </button>
        <button type="button" aria-label="5 yeni bildirim" className="relative mr-[2px] ml-4 h-6 w-6">
          <svg width="16" height="16" viewBox="0 0 16 16" className="absolute top-0 left-0" aria-hidden="true">
            <path d="M0 0h16v13H7l-3 3v-3H0z" fill="#ffffff" />
            <path d="M3 3.500h10M3 6.500h10M3 9.500h6" stroke="#0b0b0b" />
          </svg>
          <span className="absolute top-2 left-2 flex h-[17px] w-[17px] items-center justify-center rounded-full border border-[#8a8a8a] bg-[#2b2b2b] text-[11px] leading-[15px] font-bold">
            5
          </span>
        </button>
        <span className="mr-1 ml-[9px] h-full w-px bg-[#555555]" />
      </div>
    </footer>
  );
}

export default function App() {
  return (
    <div className="flex h-screen flex-col overflow-hidden bg-[#f1f1f1] font-['Noto_Sans',sans-serif] text-[11px] leading-4">
      <header className="bg-[#a4373a]">
        <TitleBar />
        <RibbonTabs />
      </header>
      <Ribbon />
      <div className="flex min-h-0 flex-1">
        <NavigationPane />
        <main className="ml-1 flex min-w-0 flex-1 flex-col border-l border-[#8f949c]">
          <DocumentTabs />
          <FormView />
          <RecordNavigation />
        </main>
      </div>
      <StatusBar />
      <Taskbar />
    </div>
  );
}
